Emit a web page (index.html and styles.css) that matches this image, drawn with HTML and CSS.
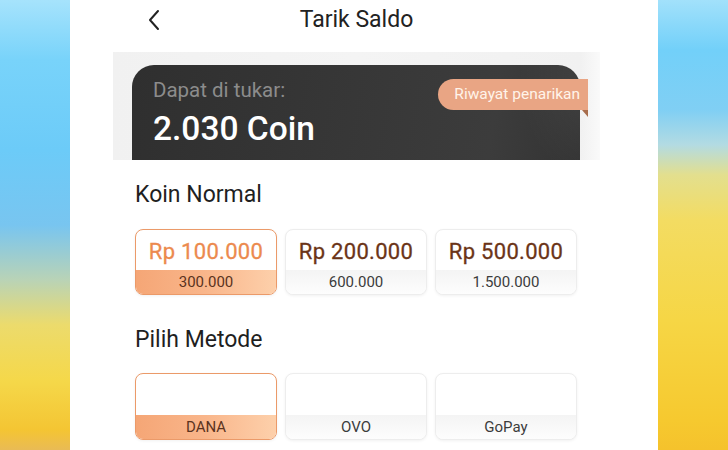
FILE: index.html
```html
<!DOCTYPE html>
<html lang="id">
<head>
<meta charset="utf-8">
<title>Tarik Saldo</title>
<link rel="stylesheet" href="styles.css">
</head>
<body>
<div class="phone">
  <div class="content">
    <header class="topbar">
      <svg class="back" width="14" height="22" viewBox="0 0 14 22"><path d="M11 2 L3 11 L11 20" fill="none" stroke="#222" stroke-width="2" stroke-linecap="round" stroke-linejoin="round"/></svg>
      <h1 class="title">Tarik Saldo</h1>
    </header>

    <section class="band">
      <div class="balance">
        <div class="b-label">Dapat di tukar:</div>
        <div class="b-value">2.030 Coin</div>
        <div class="history">Riwayat penarikan</div>
        <div class="fold"></div>
      </div>
    </section>

    <h2 class="sec-title">Koin Normal</h2>
    <div class="grid">
      <div class="opt selected">
        <div class="opt-top amount">Rp 100.000</div>
        <div class="opt-bot">300.000</div>
      </div>
      <div class="opt">
        <div class="opt-top amount">Rp 200.000</div>
        <div class="opt-bot">600.000</div>
      </div>
      <div class="opt">
        <div class="opt-top amount">Rp 500.000</div>
        <div class="opt-bot">1.500.000</div>
      </div>
    </div>

    <h2 class="sec-title second">Pilih Metode</h2>
    <div class="grid">
      <div class="opt method selected">
        <div class="opt-top"></div>
        <div class="opt-bot">DANA</div>
      </div>
      <div class="opt method">
        <div class="opt-top"></div>
        <div class="opt-bot">OVO</div>
      </div>
      <div class="opt method">
        <div class="opt-top"></div>
        <div class="opt-bot">GoPay</div>
      </div>
    </div>
  </div>
</div>
</body>
</html>
```
FILE: styles.css
```css
* { box-sizing: border-box; }
html, body { margin: 0; padding: 0; }
body {
  width: 728px;
  height: 450px;
  overflow: hidden;
  font-family: Roboto, "Noto Sans", "Liberation Sans", sans-serif;
  background:
    linear-gradient(180deg, #a6e3fc 0px, #78d3fa 60px, #6ccbf8 150px, #78c5f0 225px, #b9d3b6 280px, #ecdb6c 325px, #f5d84a 380px, #f4c533 430px, #e9bb55 450px) left top / 70px 450px no-repeat,
    linear-gradient(180deg, #a2e1fb 0px, #72d0f9 50px, #80cff4 110px, #b3dbe2 145px, #e3df8e 175px, #f3dc62 220px, #f6d645 320px, #f6c92f 420px, #f5c22c 450px) right top / 70px 450px no-repeat,
    #fff;
  display: flex;
}
.phone {
  margin-left: 70px;
  width: 588px;
  height: 450px;
  background: #fff;
}
.content {
  margin-left: 43px;
  width: 487px;
}
.topbar {
  position: relative;
  height: 40px;
  display: flex;
  align-items: center;
  justify-content: center;
}
.back {
  position: absolute;
  left: 34px;
  top: 9px;
}
.title {
  margin: 0;
  font-size: 23px;
  font-weight: 400;
  color: #222;
  line-height: 40px;
}
.band {
  margin-top: 12px;
  height: 108px;
  background: linear-gradient(90deg, #f1f1f1, #f4f4f4 50%, #f1f1f1 96%, #fafafa);
  padding: 13px 20px 0 19px;
}
.balance {
  position: relative;
  height: 95px;
  border-radius: 22px 22px 0 0;
  background:
    radial-gradient(ellipse 120px 160px at 470px 10px, rgba(255,255,255,0.07), rgba(255,255,255,0) 70%),
    linear-gradient(100deg, #2f2f2f 0%, #383838 55%, #3c3c3c 80%, #333 100%);
  padding: 13px 0 0 21px;
}
.b-label {
  font-size: 20.5px;
  color: #8c8c8c;
  line-height: 24px;
}
.b-value {
  margin-top: 8px;
  font-size: 33.5px;
  font-weight: 500;
  color: #fff;
  line-height: 38px;
}
.history {
  position: absolute;
  right: -8px;
  top: 14px;
  height: 31px;
  padding: 0 8px 0 16px;
  border-radius: 16px 0 0 16px;
  background: #e9a584;
  color: #fff4ea;
  font-size: 15.5px;
  line-height: 31px;
}
.fold {
  position: absolute;
  right: -8px;
  top: 45px;
  width: 0;
  height: 0;
  border-top: 7px solid #a86d4c;
  border-left: 6px solid transparent;
}
.sec-title {
  margin: 20px 0 0 22px;
  font-size: 23px;
  font-weight: 400;
  color: #1f1f1f;
  line-height: 30px;
}
.sec-title.second { margin-top: 30px; }
.grid {
  margin: 19px 0 0 22px;
  width: 442px;
  display: grid;
  grid-template-columns: repeat(3, 142px);
  gap: 8px;
}
.second + .grid { margin-top: 18px; }
.opt {
  height: 66px;
  border-radius: 8px;
  border: 1px solid #ededed;
  box-shadow: 0 1px 3px rgba(0,0,0,0.06);
  overflow: hidden;
  display: flex;
  flex-direction: column;
  background: #fff;
}
.opt.method { height: 67px; }
.opt-top {
  height: 40px;
  display: flex;
  align-items: center;
  justify-content: center;
}
.method .opt-top { height: 41px; }
.amount {
  font-size: 22px;
  font-weight: 400;
  letter-spacing: 0.3px;
  color: #6b3417;
  padding-top: 2px;
  -webkit-text-stroke: 0.3px currentColor;
}
.opt-bot {
  flex: 1;
  display: flex;
  align-items: center;
  justify-content: center;
  font-size: 15px;
  color: #3c3c3c;
  background: linear-gradient(180deg, #f4f4f4, #fdfdfd);
}
.opt.selected {
  border-color: #eb9a69;
}
.opt.selected .amount { color: #ec8a4e; }
.opt.selected .opt-bot {
  background: linear-gradient(90deg, #f5a676 0%, #f9b68b 50%, #fdd0ab 100%);
  color: #5b3320;
}
```
